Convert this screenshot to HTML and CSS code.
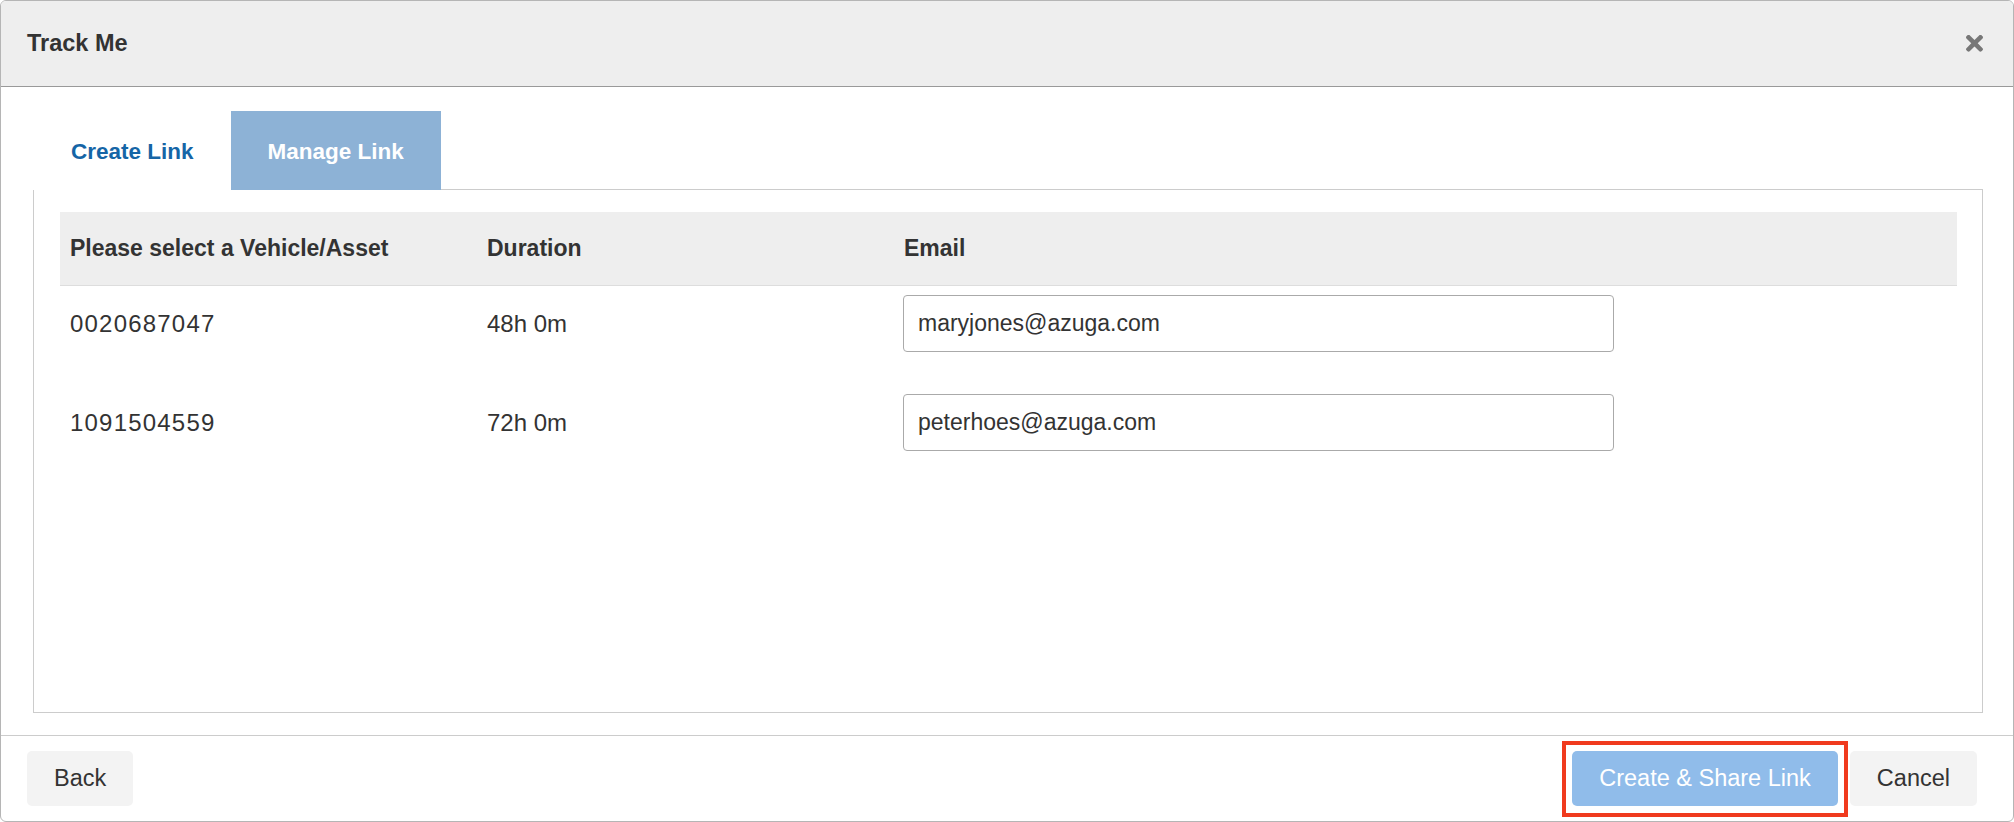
FILE: index.html
```html
<!DOCTYPE html>
<html lang="en">
<head>
    <meta charset="UTF-8">
    <meta name="viewport" content="width=device-width, initial-scale=1.0">
    <title>Track Me</title>
    <link rel="stylesheet" href="styles.css">
</head>
<body>
    <div class="modal">
        <div class="modal-header">
            <h4 class="modal-title">Track Me</h4>
            <button class="close" title="Close">
                <svg viewBox="0 84 352 352" aria-hidden="true"><path d="M242.72 256l100.07-100.07c12.28-12.28 12.28-32.19 0-44.48l-22.24-22.24c-12.28-12.28-32.19-12.28-44.48 0L176 189.28 75.93 89.21c-12.28-12.28-32.190-12.28-44.48 0L9.21 111.45c-12.28 12.28-12.28 32.19 0 44.48L109.28 256 9.21 356.07c-12.28 12.28-12.28 32.19 0 44.48l22.24 22.24c12.28 12.28 32.2 12.28 44.48 0L176 322.72l100.07 100.07c12.28 12.28 32.2 12.28 44.48 0l22.24-22.24c12.28-12.28 12.28-32.19 0-44.48L242.72 256z"/></svg>
            </button>
        </div>

        <div class="modal-body">
            <ul class="tabs">
                <li class="tab">Create Link</li>
                <li class="tab active">Manage Link</li>
                <li class="tab-fill"></li>
            </ul>

            <div class="tab-panel">
                <div class="grid-row grid-head">
                    <div>Please select a Vehicle/Asset</div>
                    <div>Duration</div>
                    <div>Email</div>
                </div>
                <div class="grid-row">
                    <div class="asset-id">0020687047</div>
                    <div>48h 0m</div>
                    <div><input type="email" class="email-input" value="maryjones@azuga.com"></div>
                </div>
                <div class="grid-row">
                    <div class="asset-id">1091504559</div>
                    <div>72h 0m</div>
                    <div><input type="email" class="email-input" value="peterhoes@azuga.com"></div>
                </div>
            </div>
        </div>

        <div class="modal-footer">
            <button class="btn">Back</button>
            <div class="footer-actions">
                <span class="highlight">
                    <button class="btn btn-primary">Create &amp; Share Link</button>
                </span>
                <button class="btn">Cancel</button>
            </div>
        </div>
    </div>
</body>
</html>
```

FILE: styles.css
```css
* {
    box-sizing: border-box;
}

body {
    margin: 0;
    font-family: "Liberation Sans", Arial, sans-serif;
    color: #333;
    background-color: #fff;
}

.modal {
    width: 2014px;
    height: 822px;
    border: 1px solid #b5b5b5;
    border-radius: 6px;
    display: flex;
    flex-direction: column;
    overflow: hidden;
}

/* header */
.modal-header {
    flex-shrink: 0;
    height: 86px;
    background-color: #eee;
    border-bottom: 1px solid #999;
    display: flex;
    align-items: center;
    justify-content: space-between;
    padding: 0 30px 0 26px;
}

.modal-title {
    margin: 0;
    font-size: 23.5px;
    font-weight: bold;
    color: #333;
}

.close {
    width: 17px;
    height: 17px;
    padding: 0;
    border: none;
    background: none;
    cursor: pointer;
}

.close svg {
    display: block;
    width: 17px;
    height: 17px;
    fill: #777;
}

/* body + tabs */
.modal-body {
    flex: 1;
    display: flex;
    flex-direction: column;
    padding: 24px 30px 22px 32px;
}

.tabs {
    display: flex;
    height: 79px;
    margin: 0 0 0 1px;
    padding: 0;
    list-style: none;
}

.tab {
    display: flex;
    align-items: center;
    padding: 3px 37px 0;
    font-size: 22.5px;
    font-weight: bold;
    color: #1565a6;
    cursor: pointer;
}

.tab.active {
    background-color: #8db2d6;
    color: #fff;
}

.tab-fill {
    flex: 1;
    border-bottom: 1px solid #ccc;
}

.tab-panel {
    flex: 1;
    border: 1px solid #ccc;
    border-top: none;
    padding: 22px 25px 0 26px;
}

/* vehicle table */
.grid-row {
    display: grid;
    grid-template-columns: 417px 417px 1fr;
    align-items: center;
    padding: 9px 0 33px;
    font-size: 24px;
}

.grid-row > div {
    padding-left: 10px;
}

.grid-head {
    height: 74px;
    padding: 0;
    background-color: #eee;
    border-bottom: 1px solid #ddd;
    font-size: 23px;
    font-weight: bold;
}

.asset-id {
    letter-spacing: 1.2px;
}

.email-input {
    display: block;
    width: 711px;
    height: 57px;
    margin-left: -1px;
    padding: 0 14px;
    border: 1px solid #aaa;
    border-radius: 4px;
    font-family: "Liberation Sans", Arial, sans-serif;
    font-size: 23px;
    color: #333;
}

.email-input:focus {
    outline: none;
    border-color: #8db2d6;
}

/* footer */
.modal-footer {
    flex-shrink: 0;
    display: flex;
    align-items: center;
    justify-content: space-between;
    border-top: 1px solid #ccc;
    padding: 15px 36px 15px 26px;
}

.footer-actions {
    display: flex;
    align-items: center;
    gap: 13px;
}

.btn {
    display: block;
    height: 55px;
    padding: 0 27px;
    border: none;
    border-radius: 5px;
    background-color: #f3f3f3;
    font-family: "Liberation Sans", Arial, sans-serif;
    font-size: 23.5px;
    color: #333;
    cursor: pointer;
}

.btn-primary {
    background-color: #90bcea;
    color: #fff;
}

/* red marker box round the primary action, kept out of the flow */
.highlight {
    display: block;
    margin: -11px -11px -12px -10px;
    padding: 6px 6px 7px 6px;
    border: 4px solid #f03a1e;
}
```
